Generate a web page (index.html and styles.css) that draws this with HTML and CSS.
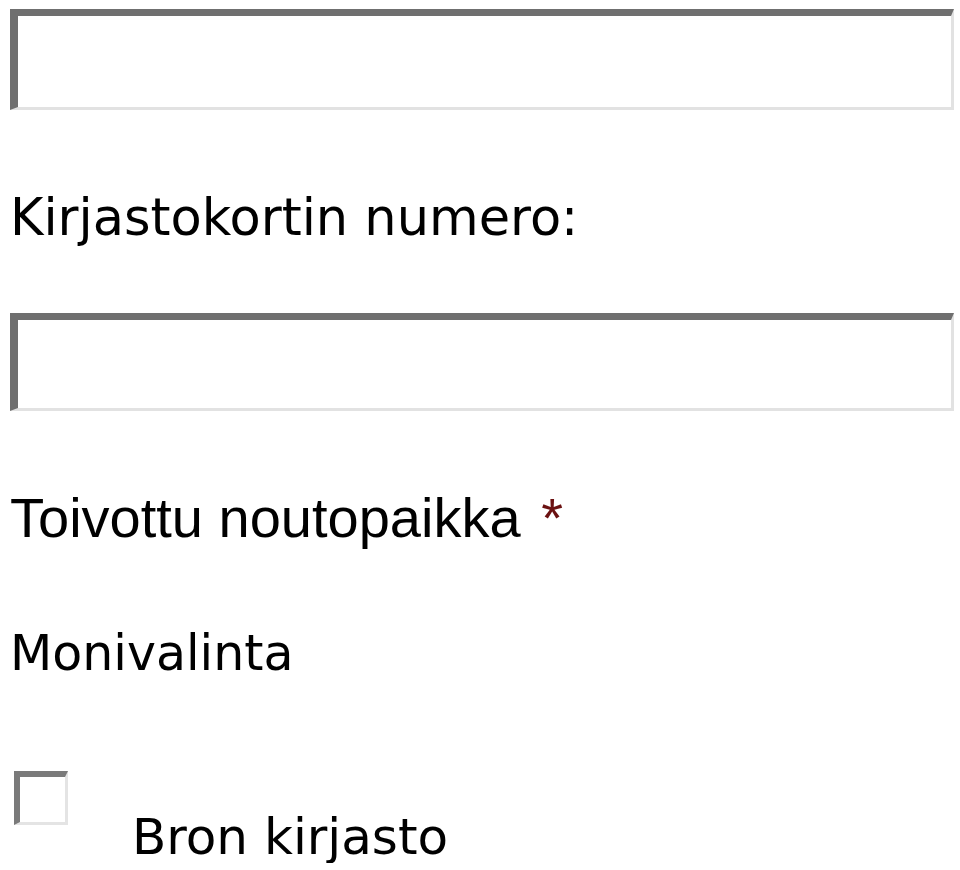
FILE: index.html
```html
<!DOCTYPE html>
<html lang="fi">

<head>
	<meta charset="utf-8" />
	<title>Varaus</title>
	<link rel="stylesheet" href="styles.css">
</head>

<body>
	<div class="form">
		<div class="field-box"></div>
		<div class="label verdana">Kirjastokortin numero:</div>
		<div class="field-box second"></div>
		<div class="label arial">Toivottu noutopaikka <span class="req">*</span></div>
		<div class="label multi">Monivalinta</div>
		<div class="choice">
			<span class="check"></span>
			<span class="choice-text">Bron kirjasto</span>
		</div>
	</div>
</body>

</html>
```

FILE: styles.css
```css
body {
	margin: 0;
	background: #fff;
	color: #000;
}

.form {
	padding: 9px 6px 0 10px;
}

.field-box {
	height: 91px;
	border-top: 7px solid #6f6f6f;
	border-left: 8px solid #6f6f6f;
	border-bottom: 3px solid #e2e2e2;
	border-right: 3px solid #e2e2e2;
	background: #fff;
}

.field-box.second {
	height: 88px;
}

.label {
	white-space: nowrap;
}

.verdana {
	font-family: "DejaVu Sans", Verdana, sans-serif;
	font-size: 51px;
	line-height: 51px;
	margin: 82px 0 70px;
}

.arial {
	font-family: "Liberation Sans", Arial, sans-serif;
	font-size: 56px;
	line-height: 56px;
	margin-top: 79px;
}

.req {
	color: #6b1111;
	margin-left: 5px;
}

.multi {
	font-family: "DejaVu Sans", Verdana, sans-serif;
	font-size: 49px;
	line-height: 51px;
	margin-top: 82px;
}

.choice {
	display: flex;
	align-items: flex-start;
	margin-top: 92px;
	padding-left: 4px;
}

.check {
	width: 45px;
	height: 45px;
	border-top: 6px solid #7a7a7a;
	border-left: 6px solid #7a7a7a;
	border-bottom: 3px solid #e4e4e4;
	border-right: 3px solid #e4e4e4;
}

.choice-text {
	font-family: "DejaVu Sans", Verdana, sans-serif;
	font-size: 50px;
	line-height: 51px;
	margin: 41px 0 0 64px;
}
```
